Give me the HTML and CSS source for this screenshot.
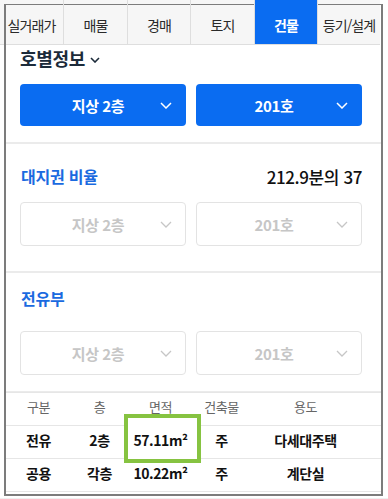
FILE: index.html
```html
<!DOCTYPE html>
<html lang="ko">
<head>
<meta charset="utf-8">
<link rel="stylesheet" href="styles.css">
</head>
<body>
<nav class="tabs">
  <div class="tab">실거래가</div>
  <div class="tab">매물</div>
  <div class="tab">경매</div>
  <div class="tab">토지</div>
  <div class="tab active">건물</div>
  <div class="tab">등기/설계</div>
</nav>
<div class="frame">
  <section class="sec sec1">
    <h2 class="title">호별정보 <svg class="title-chev" width="10" height="6" viewBox="0 0 10 6"><polyline points="1,1 5,5 9,1" fill="none" stroke="#1c2b3a" stroke-width="1.6"/></svg></h2>
    <div class="selects">
      <div class="sel primary"><span class="sel-text">지상 2층</span><svg class="chev" width="12" height="7" viewBox="0 0 12 7"><polyline points="1,1 6,6 11,1" fill="none" stroke="currentColor" stroke-width="1.5"/></svg></div>
      <div class="sel primary"><span class="sel-text">201호</span><svg class="chev" width="12" height="7" viewBox="0 0 12 7"><polyline points="1,1 6,6 11,1" fill="none" stroke="currentColor" stroke-width="1.5"/></svg></div>
    </div>
  </section>
  <section class="sec sec2">
    <div class="row-label">
      <span class="label">대지권 비율</span>
      <span class="value">212.9분의 37</span>
    </div>
    <div class="selects">
      <div class="sel disabled"><span class="sel-text">지상 2층</span><svg class="chev" width="12" height="7" viewBox="0 0 12 7"><polyline points="1,1 6,6 11,1" fill="none" stroke="currentColor" stroke-width="1.3"/></svg></div>
      <div class="sel disabled"><span class="sel-text">201호</span><svg class="chev" width="12" height="7" viewBox="0 0 12 7"><polyline points="1,1 6,6 11,1" fill="none" stroke="currentColor" stroke-width="1.3"/></svg></div>
    </div>
  </section>
  <section class="sec sec3">
    <div class="row-label">
      <span class="label">전유부</span>
    </div>
    <div class="selects">
      <div class="sel disabled"><span class="sel-text">지상 2층</span><svg class="chev" width="12" height="7" viewBox="0 0 12 7"><polyline points="1,1 6,6 11,1" fill="none" stroke="currentColor" stroke-width="1.3"/></svg></div>
      <div class="sel disabled"><span class="sel-text">201호</span><svg class="chev" width="12" height="7" viewBox="0 0 12 7"><polyline points="1,1 6,6 11,1" fill="none" stroke="currentColor" stroke-width="1.3"/></svg></div>
    </div>
  </section>
  <div class="table">
    <div class="tr head">
      <span>구분</span><span>층</span><span>면적</span><span>건축물</span><span>용도</span>
    </div>
    <div class="tr">
      <span>전유</span><span>2층</span><span class="hl">57.11m²</span><span>주</span><span>다세대주택</span>
    </div>
    <div class="tr">
      <span>공용</span><span>각층</span><span>10.22m²</span><span>주</span><span>계단실</span>
    </div>
  </div>
</div>
<div class="below"></div>
</body>
</html>
```
FILE: styles.css
```css
* { box-sizing: border-box; }
html, body { margin: 0; padding: 0; }
body {
  background: #fff;
  font-family: "Noto Sans CJK KR", "Noto Sans", sans-serif;
  color: #111;
  width: 388px;
  overflow: hidden;
}
.tabs {
  display: grid;
  grid-template-columns: 64px 64px 63px 64px 63px 62px;
  width: 380px;
  height: 45px;
  background: #f6f6f6;
  border-bottom: 1px solid #dedede;
}
.tab {
  display: flex;
  align-items: center;
  justify-content: center;
  padding-top: 5px;
  font-size: 14px;
  letter-spacing: -0.9px;
  color: #2a2a2a;
  border-right: 1px solid #dedede;
  white-space: nowrap;
}
.tab:last-child { border-right: none; }
.tab.active {
  background: #0a6cf1;
  color: #fff;
  font-weight: 700;
  position: relative;
  z-index: 1;
}
.frame {
  margin-top: -41px;
  margin-left: 4px;
  width: 379px;
  border: 2px solid #7c7c7c;
  border-top-width: 1px;
  padding-top: 40px;
  padding-bottom: 2px;
}
.sec { border-bottom: 2px solid #ebebeb; }
.sec1 { padding: 0 19px 16px 14px; }
.sec2 { padding: 20px 19px 25px 14px; }
.sec3 { padding: 13px 19px 16px 14px; }
.title {
  margin: 1px 0 0 0;
  height: 25px;
  display: flex;
  align-items: center;
  gap: 5px;
  font-size: 18px;
  font-weight: 700;
  color: #1c2b3a;
  letter-spacing: -0.3px;
  line-height: 25px;
}
.title-chev { margin-top: 3px; }
.selects {
  display: grid;
  grid-template-columns: 1fr 1fr;
  gap: 10px;
  margin-top: 13px;
}
.sec2 .selects { margin-top: 14px; }
.sec3 .selects { margin-top: 21px; }
.sel {
  display: flex;
  align-items: center;
  border-radius: 4px;
  height: 42px;
}
.sel-text {
  flex: 1;
  text-align: center;
  padding-left: 16px;
  font-size: 15px;
  font-weight: 700;
  letter-spacing: -0.4px;
}
.chev { margin-right: 14px; flex: none; }
.sel.primary { background: #0a6cf1; color: #fff; }
.sel.disabled {
  height: 44px;
  border: 1px solid #e3e3e3;
  color: #c6c6c6;
}
.sel.disabled .sel-text { font-weight: 600; padding-left: 15px; }
.sel.disabled .chev { margin-right: 13px; }
.row-label {
  display: flex;
  justify-content: space-between;
  align-items: center;
  height: 24px;
  padding-left: 1px;
}
.label {
  font-size: 16px;
  font-weight: 700;
  color: #1a6ae0;
  letter-spacing: -0.2px;
}
.value {
  font-size: 17px;
  font-weight: 500;
  color: #111;
  letter-spacing: -0.4px;
}
.table { border-top: 1px solid #e6e6e6; margin-top: -1px; }
.tr {
  display: grid;
  grid-template-columns: 61px 61px 61px 61px 107px;
  padding-left: 2px;
  height: 33px;
  border-bottom: 1px solid #e6e6e6;
  align-items: center;
}
.tr span {
  text-align: center;
  font-size: 14px;
  font-weight: 600;
  color: #111;
  letter-spacing: -0.4px;
  padding-bottom: 5px;
  white-space: nowrap;
}
.tr.head span {
  font-size: 13px;
  font-weight: 400;
  color: #666;
  padding-bottom: 6px;
}
.hl { position: relative; z-index: 0; }
.hl::before {
  content: "";
  position: absolute;
  z-index: -1;
  left: -6px;
  top: -16px;
  width: 69px;
  height: 41px;
  background: #fff;
  border: 4px solid #86c341;
}
.below {
  height: 10px;
  margin-top: 2px;
  background: #f0f0f0;
}
```
